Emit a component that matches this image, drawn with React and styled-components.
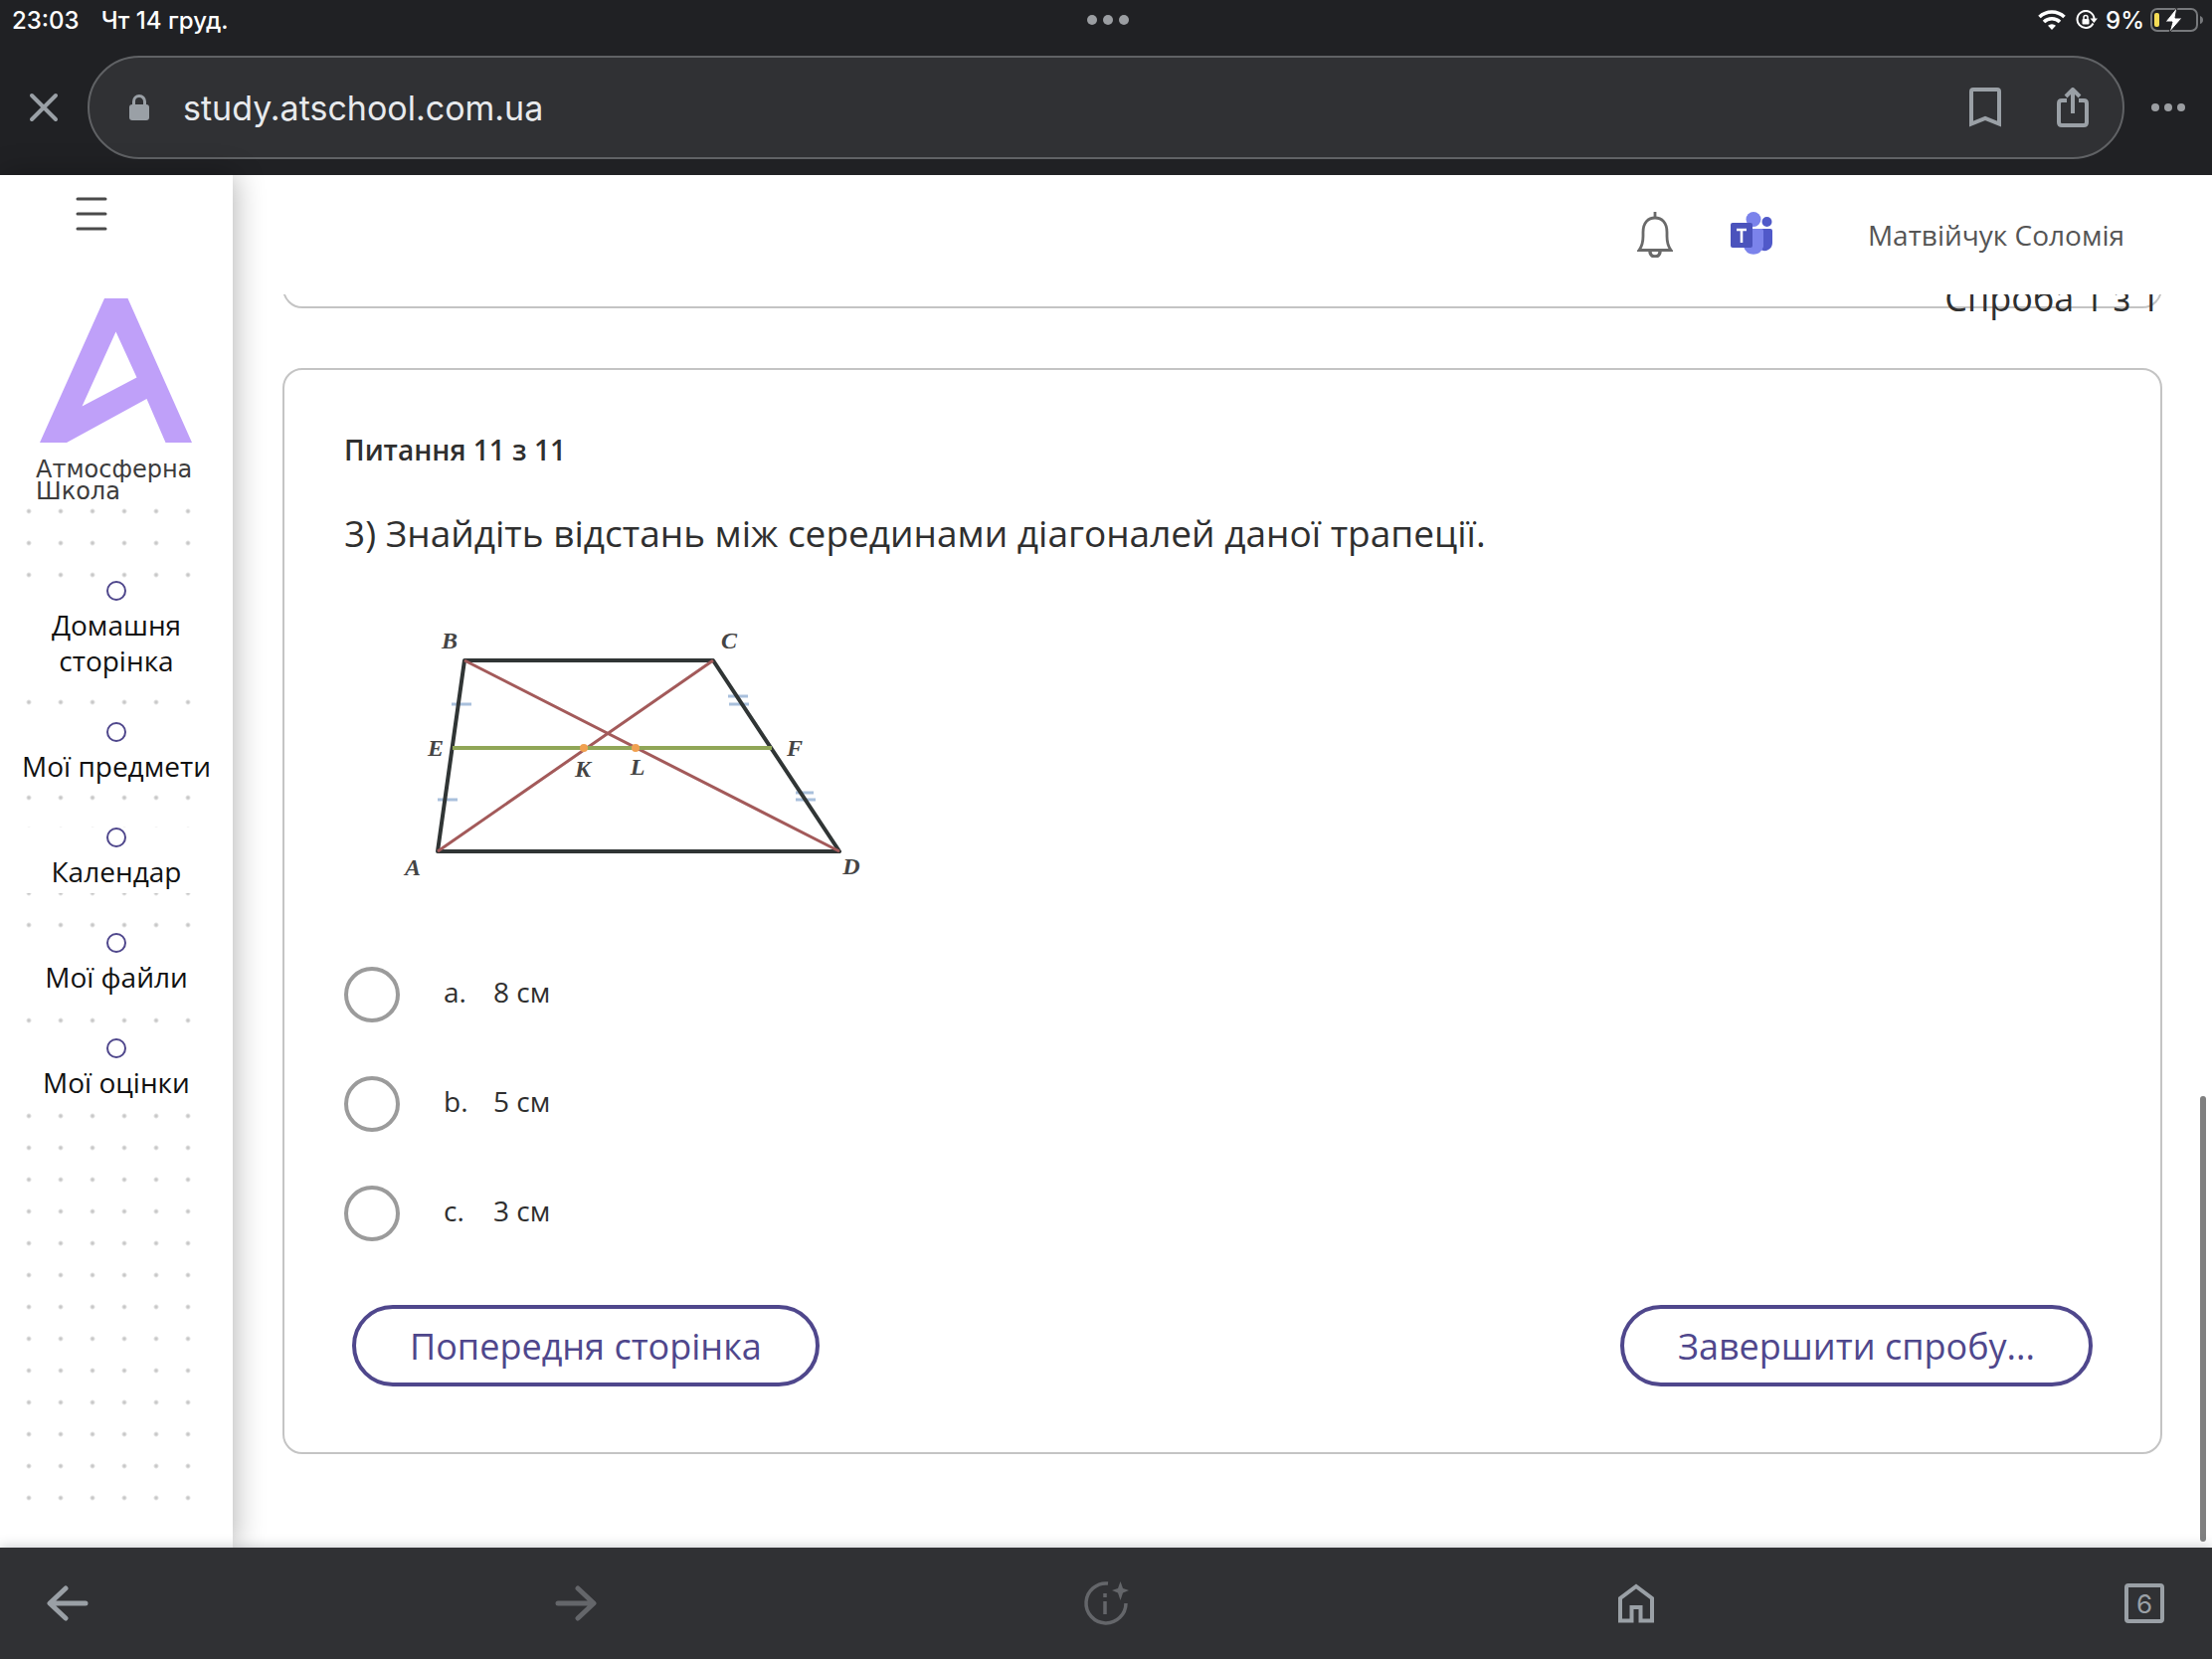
/* eslint-disable react/prop-types */
import React from 'react';
import styled, { createGlobalStyle } from 'styled-components';

const colors = {
  chrome: '#202124',
  chromeLight: '#303134',
  chromeBorder: '#606265',
  icon: '#9aa0a6',
  iconDim: '#64666a',
  accent: '#4f478c',
  logo: '#bfa0f9',
  text: '#2f2f2f',
  line: '#c4c4c4',
};

const textFont = '"Open Sans", "Noto Sans", sans-serif';
const systemFont = 'Inter, Roboto, sans-serif';

const NAV_ITEMS = [
  'Домашня сторінка',
  'Мої предмети',
  'Календар',
  'Мої файли',
  'Мої оцінки',
];

const ANSWERS = [
  { letter: 'a', text: '8 см' },
  { letter: 'b', text: '5 см' },
  { letter: 'c', text: '3 см' },
];

const GlobalStyle = createGlobalStyle`
  *, *::before, *::after {
    box-sizing: border-box;
  }

  body {
    margin: 0;
    background: #fff;
  }

  button, input {
    margin: 0;
    padding: 0;
    border: 0;
    background: none;
    font: inherit;
    color: inherit;
  }

  svg {
    display: block;
    flex: none;
  }
`;

const Screen = styled.div`
  display: flex;
  flex-direction: column;
  height: 100vh;
  overflow: hidden;
  font-family: ${textFont};
  color: ${colors.text};
`;

/* browser chrome */

const TopChrome = styled.header`
  flex: none;
  background: ${colors.chrome};
  font-family: ${systemFont};
`;

const StatusBar = styled.div`
  display: grid;
  grid-template-columns: 1fr auto 1fr;
  align-items: center;
  height: 40px;
  padding: 0 8px 0 12px;
  color: #fff;
  font-size: 24px;
  font-weight: 500;
`;

const StatusGroup = styled.div`
  display: flex;
  align-items: center;
  justify-content: ${({ $end }) => ($end ? 'flex-end' : 'flex-start')};
  gap: ${({ $end }) => ($end ? '6px' : '22px')};
`;

const AddressRow = styled.div`
  display: flex;
  padding: 16px 0;
`;

const ChromeButton = styled.button`
  display: flex;
  align-items: center;
  justify-content: center;
  width: ${({ $width }) => $width || '88px'};
  color: ${({ $dim }) => ($dim ? colors.iconDim : colors.icon)};
`;

const AddressBar = styled.div`
  display: flex;
  flex: 1;
  align-items: center;
  height: 104px;
  padding: 0 34px 0 40px;
  border: 2px solid ${colors.chromeBorder};
  border-radius: 52px;
  background: ${colors.chromeLight};
  color: ${colors.icon};
`;

const AddressInput = styled.input`
  flex: 1;
  min-width: 0;
  margin-left: 34px;
  color: #e8eaed;
  font-size: 34px;
  outline: none;
`;

const AddressActions = styled.div`
  display: flex;
  gap: 56px;
`;

const BottomChrome = styled.nav`
  position: relative;
  z-index: 3;
  display: flex;
  flex: none;
  align-items: stretch;
  justify-content: space-between;
  height: 112px;
  padding: 0 44px;
  background: ${colors.chromeLight};
  box-shadow: 0 0 12px rgba(60, 70, 80, 0.3);
  font-family: ${systemFont};
`;

const TabCount = styled.span`
  display: flex;
  align-items: center;
  justify-content: center;
  width: 40px;
  height: 40px;
  border: 4px solid ${colors.icon};
  border-radius: 4px;
  font-size: 26px;
`;

/* site */

const Page = styled.div`
  position: relative;
  display: flex;
  flex: 1;
  min-height: 0;
`;

const Sidebar = styled.aside`
  position: relative;
  z-index: 2;
  display: flex;
  flex: none;
  flex-direction: column;
  width: 234px;
  padding-bottom: 36px;
  background: #fff;
  box-shadow: 2px 0 28px rgba(0, 0, 0, 0.3);
`;

const MenuButton = styled.button`
  align-self: flex-start;
  margin: 22px 0 0 76px;
  color: #4a4a4a;
`;

const Logo = styled.a`
  display: block;
  margin: 68px 0 0 36px;
  color: #3c3c3c;
  font-family: "DejaVu Sans", sans-serif;
  font-size: 24px;
  line-height: 22px;
  text-decoration: none;

  svg {
    margin: 0 0 16px 4px;
  }
`;

const SideNav = styled.nav`
  flex: 1;
  margin-top: 5px;
  padding-top: 74px;
  background:
    linear-gradient(#fff, #fff) right / 24px 100% no-repeat,
    radial-gradient(circle, #c8c8c8 1px, transparent 3px) 13px -12px / 32px 32px;
`;

const NavList = styled.ul`
  display: flex;
  flex-direction: column;
  gap: 40px;
  margin: 0;
  padding: 0;
  list-style: none;
`;

const NavLink = styled.a`
  display: block;
  padding: 0 10px 4px;
  background: #fff;
  color: #111;
  font-size: 28px;
  line-height: 36px;
  text-align: center;
  text-decoration: none;

  &::before {
    content: '';
    display: block;
    width: 20px;
    height: 20px;
    margin: 0 auto 6px;
    border: 2px solid ${colors.accent};
    border-radius: 50%;
  }
`;

const Main = styled.main`
  display: flex;
  flex: 1;
  flex-direction: column;
  min-width: 0;
`;

const SiteHeader = styled.div`
  display: flex;
  flex: none;
  align-items: center;
  justify-content: flex-end;
  height: 120px;
  padding-right: 88px;
`;

const HeaderButton = styled.button`
  margin-right: ${({ $gap }) => $gap};
`;

const UserName = styled.a`
  color: #555;
  font-size: 28px;
  text-decoration: none;
`;

const Scroller = styled.div`
  flex: 1;
  min-height: 0;
  padding: 0 50px;
  overflow: hidden;
`;

const Card = styled.section`
  border: 2px solid ${colors.line};
  border-radius: 20px;
`;

/* scrolled mostly out of view */
const AttemptCard = styled(Card)`
  height: 120px;
  margin-top: -106px;
  padding-top: 84px;
  font-size: 36px;
  line-height: 48px;
  text-align: right;
`;

const QuestionCard = styled(Card)`
  margin-top: 60px;
  padding: 60px 60px 66px;
`;

const QuestionNumber = styled.h2`
  margin: 0;
  font-size: 28px;
  font-weight: 600;
  line-height: 40px;
`;

const QuestionText = styled.p`
  margin: 40px 0;
  font-size: 37px;
  line-height: 48px;
`;

const Answers = styled.fieldset`
  display: flex;
  flex-direction: column;
  gap: 54px;
  margin: 72px 0 64px;
  padding: 0;
  border: 0;
`;

const Answer = styled.label`
  display: flex;
  align-items: center;
  font-size: 28px;
  line-height: 36px;
`;

const Radio = styled.input`
  appearance: none;
  width: 56px;
  height: 56px;
  margin-right: 44px;
  border: 4px solid #9b9b9b;
  border-radius: 50%;

  &:checked {
    border-width: 16px;
    border-color: ${colors.accent};
  }
`;

const AnswerLetter = styled.span`
  width: 50px;
  padding-bottom: 6px;
`;

const AnswerText = styled.span`
  padding-bottom: 6px;
`;

const Actions = styled.div`
  display: flex;
  justify-content: space-between;
  padding: 0 8px;
`;

const PillButton = styled.button`
  height: 82px;
  padding: 0 54px;
  border: 4px solid ${colors.accent};
  border-radius: 41px;
  color: ${colors.accent};
  font-size: 36px;
`;

const ScrollThumb = styled.div`
  position: absolute;
  right: 6px;
  bottom: 6px;
  width: 6px;
  height: 448px;
  border-radius: 3px;
  background: #808080;
`;

const Dots = ({ r, gap }) => (
  <svg width={gap * 2 + r * 2} height={r * 2} fill="#9b9ea2">
    {[0, 1, 2].map((i) => (
      <circle key={i} cx={r + i * gap} cy={r} r={r} />
    ))}
  </svg>
);

const CloseIcon = () => (
  <svg width="30" height="30" viewBox="0 0 30 30" stroke="currentColor" strokeWidth="4" strokeLinecap="round">
    <path d="M3 3l24 24M27 3L3 27" />
  </svg>
);

const LockIcon = () => (
  <svg width="20" height="26" viewBox="0 0 20 26" fill="none">
    <rect y="10" width="20" height="16" rx="3" fill="currentColor" />
    <path d="M4.500 12V7a5.500 5.500 0 0 1 11 0v5" stroke="currentColor" strokeWidth="3" />
  </svg>
);

const BookmarkIcon = () => (
  <svg width="32" height="40" viewBox="0 0 32 40" fill="none" stroke="currentColor" strokeWidth="4">
    <path d="M2 36.500V4q0-2 2-2h24q2 0 2 2v32.500L16 31z" />
  </svg>
);

const ShareIcon = () => (
  <svg width="32" height="40" viewBox="0 0 32 40" fill="none" stroke="currentColor" strokeWidth="4">
    <path d="M10 13H5q-3 0-3 3v19q0 3 3 3h22q3 0 3-3V16q0-3-3-3h-5" />
    <path d="M16 26V3M9 9l7-7 7 7" strokeLinejoin="round" />
  </svg>
);

const WifiIcon = () => (
  <svg width="28" height="20" viewBox="0 0 28 20" fill="none" stroke="#fff" strokeWidth="3.600">
    <path d="M1.500 7a18 18 0 0 1 25 0" />
    <path d="M6 12a11.500 11.500 0 0 1 16 0" />
    <path d="M14 20l-4-4.200a5.800 5.800 0 0 1 8 0z" fill="#fff" stroke="none" />
  </svg>
);

const RotationLockIcon = () => (
  <svg width="28" height="20" viewBox="-4 0 28 20" fill="none" stroke="#fff" strokeWidth="2">
    <path d="M17.500 13.500A8.500 8.500 0 1 1 18.500 9" />
    <path d="M14.500 8.500h7.500L18.300 13z" fill="#fff" stroke="none" />
    <rect x="6.500" y="9" width="7" height="5.500" rx="1" fill="#fff" stroke="none" />
    <path d="M8 9.500V7.500a2 2 0 0 1 4 0v2" strokeWidth="1.500" />
  </svg>
);

const BatteryIcon = () => (
  <svg width="54" height="26" viewBox="0 0 54 26">
    <rect x="1" y="2" width="46" height="22" rx="6" fill="none" stroke="#77797c" strokeWidth="2" />
    <path d="M50 9q3 1 3 4t-3 4z" fill="#77797c" />
    <rect x="4" y="6" width="5" height="14" rx="2" fill="#f5dc55" />
    <path
      d="M27 0L15 15h7l-3 11 13-15h-7z"
      fill="#fff"
      stroke={colors.chrome}
      strokeWidth="1"
    />
  </svg>
);

const ArrowIcon = ({ forward }) => (
  <svg width="42" height="36" viewBox="0 0 42 36" fill="none" stroke="currentColor" strokeWidth="5" strokeLinecap="round" strokeLinejoin="round">
    <path d={forward ? 'M3 18h35M23 3l16 15-16 15' : 'M39 18H4M19 3L3 18l16 15'} />
  </svg>
);

const InfoIcon = () => (
  <svg width="46" height="46" viewBox="0 0 46 46" fill="none" stroke="currentColor" strokeWidth="3.500">
    <path d="M25 3a20 20 0 1 0 18 20" />
    <path d="M22 21v13M22 13v4" />
    <path d="M37.500 1l2.500 7 6 2-6 2.500-2.500 7.500-2.500-7.500-6-2.500 6-2z" fill="currentColor" stroke="none" />
  </svg>
);

const HomeIcon = () => (
  <svg width="36" height="40" viewBox="0 0 36 40" fill="none" stroke="currentColor" strokeWidth="4">
    <path d="M2 37.500V15L18 3l16 12v22.500H22.500V24h-9v13.500z" />
  </svg>
);

const MenuIcon = () => (
  <svg width="32" height="34" viewBox="0 0 32 34" stroke="currentColor" strokeWidth="3" strokeLinecap="round">
    <path d="M2 2h28M2 17h28M2 32h28" />
  </svg>
);

const LogoMark = () => (
  <svg width="153" height="145" viewBox="0 0 153 145" fill={colors.logo}>
    <path
      fillRule="evenodd"
      d="M65 0H88.500L153 145H126.500L107.500 101L27 145H0zM76.500 33.500L42.500 108.500L97.500 79.500z"
    />
  </svg>
);

const BellIcon = () => (
  <svg width="36" height="46" viewBox="0 0 36 46" fill="none" stroke="#6a6a6a" strokeWidth="2.800">
    <path d="M18 0v6" />
    <path d="M2 38.500h32c-3-4-4-8-4-14v-4C30 11 25 6 18 6S6 11 6 20.500v4c0 6-1 10-4 14z" />
    <path d="M13 40a5 5 0 0 0 10 0" strokeWidth="3.400" />
  </svg>
);

const TeamsIcon = () => (
  <svg width="42" height="46" viewBox="0 0 42 46">
    <circle cx="36.500" cy="10" r="5" fill="#5059c9" />
    <path d="M30 17h10q2 0 2 2v12a8 8 0 0 1-12 7z" fill="#5059c9" />
    <circle cx="23" cy="7.500" r="7.500" fill="#7b83eb" />
    <path d="M13 17h18q2 0 2 2v16a10.500 11 0 0 1-20 0z" fill="#7b83eb" />
    <rect y="11" width="22" height="25" rx="2" fill="#4b53bc" />
    <path d="M6 18h10M11 18v13" stroke="#fff" strokeWidth="2.600" />
  </svg>
);

const DIAGRAM_LABELS = [
  ['A', 415, 880],
  ['B', 452, 652],
  ['C', 733, 652],
  ['D', 856, 879],
  ['E', 438, 760],
  ['F', 799, 760],
  ['K', 586, 781],
  ['L', 641, 779],
];

const Trapezoid = () => (
  <svg width="560" height="300" viewBox="346 600 560 300" fill="none" role="img" aria-label="ABCD">
    <g stroke="#a9c0dc" strokeWidth="3">
      <path d="M454 708h20M440 804h20M732 700h20M733 708h20M800 797h18M800 804h20" />
    </g>
    <path d="M440 856L467 664H717L844 856z" stroke="#303535" strokeWidth="4" strokeLinejoin="round" />
    <path d="M440 856L717 664M467 664L844 856" stroke="#a35a5a" strokeWidth="3" />
    <path d="M455 752H776" stroke="#90a657" strokeWidth="4" />
    <circle cx="587" cy="752" r="4" fill="#f0a050" />
    <circle cx="639" cy="752" r="4" fill="#f0a050" />
    <g
      fill="#444"
      fontFamily='"Liberation Serif", serif'
      fontSize="24"
      fontStyle="italic"
      fontWeight="bold"
      textAnchor="middle"
    >
      {DIAGRAM_LABELS.map(([name, x, y]) => (
        <text key={name} x={x} y={y}>
          {name}
        </text>
      ))}
    </g>
  </svg>
);

const BrowserTop = () => (
  <TopChrome>
    <StatusBar>
      <StatusGroup>
        <span>23:03</span>
        <span>Чт 14 груд.</span>
      </StatusGroup>
      <Dots r={5} gap={16} />
      <StatusGroup $end>
        <WifiIcon />
        <RotationLockIcon />
        <span>9%</span>
        <BatteryIcon />
      </StatusGroup>
    </StatusBar>
    <AddressRow>
      <ChromeButton aria-label="Закрити">
        <CloseIcon />
      </ChromeButton>
      <AddressBar>
        <LockIcon />
        <AddressInput aria-label="Адреса" defaultValue="study.atschool.com.ua" />
        <AddressActions>
          <ChromeButton $width="32px" aria-label="Закладка">
            <BookmarkIcon />
          </ChromeButton>
          <ChromeButton $width="32px" aria-label="Поділитися">
            <ShareIcon />
          </ChromeButton>
        </AddressActions>
      </AddressBar>
      <ChromeButton aria-label="Більше">
        <Dots r={4} gap={13} />
      </ChromeButton>
    </AddressRow>
  </TopChrome>
);

const BrowserBottom = () => (
  <BottomChrome>
    <ChromeButton $width="48px" aria-label="Назад">
      <ArrowIcon />
    </ChromeButton>
    <ChromeButton $width="48px" $dim aria-label="Вперед">
      <ArrowIcon forward />
    </ChromeButton>
    <ChromeButton $width="92px" $dim aria-label="Про сторінку">
      <InfoIcon />
    </ChromeButton>
    <ChromeButton $width="48px" aria-label="Головна">
      <HomeIcon />
    </ChromeButton>
    <ChromeButton $width="48px" aria-label="Вкладки">
      <TabCount>6</TabCount>
    </ChromeButton>
  </BottomChrome>
);

const SiteSidebar = () => (
  <Sidebar>
    <MenuButton aria-label="Меню">
      <MenuIcon />
    </MenuButton>
    <Logo href="#home">
      <LogoMark />
      Атмосферна
      <br />
      Школа
    </Logo>
    <SideNav>
      <NavList>
        {NAV_ITEMS.map((item) => (
          <li key={item}>
            <NavLink href="#nav">{item}</NavLink>
          </li>
        ))}
      </NavList>
    </SideNav>
  </Sidebar>
);

const Question = () => (
  <QuestionCard>
    <QuestionNumber>Питання 11 з 11</QuestionNumber>
    <QuestionText>
      3) Знайдіть відстань між серединами діагоналей даної трапеції.
    </QuestionText>
    <Trapezoid />
    <Answers aria-label="Варіанти відповіді">
      {ANSWERS.map(({ letter, text }) => (
        <Answer key={letter}>
          <Radio type="radio" name="answer" value={letter} />
          <AnswerLetter>{`${letter}.`}</AnswerLetter>
          <AnswerText>{text}</AnswerText>
        </Answer>
      ))}
    </Answers>
    <Actions>
      <PillButton type="button">Попередня сторінка</PillButton>
      <PillButton type="button">Завершити спробу...</PillButton>
    </Actions>
  </QuestionCard>
);

export default function App() {
  return (
    <Screen>
      <GlobalStyle />
      <BrowserTop />
      <Page>
        <SiteSidebar />
        <Main>
          <SiteHeader>
            <HeaderButton $gap="58px" aria-label="Сповіщення">
              <BellIcon />
            </HeaderButton>
            <HeaderButton $gap="96px" aria-label="Teams">
              <TeamsIcon />
            </HeaderButton>
            <UserName href="#profile">Матвійчук Соломія</UserName>
          </SiteHeader>
          <Scroller>
            <AttemptCard>Спроба 1 з 1</AttemptCard>
            <Question />
          </Scroller>
        </Main>
        <ScrollThumb />
      </Page>
      <BrowserBottom />
    </Screen>
  );
}
